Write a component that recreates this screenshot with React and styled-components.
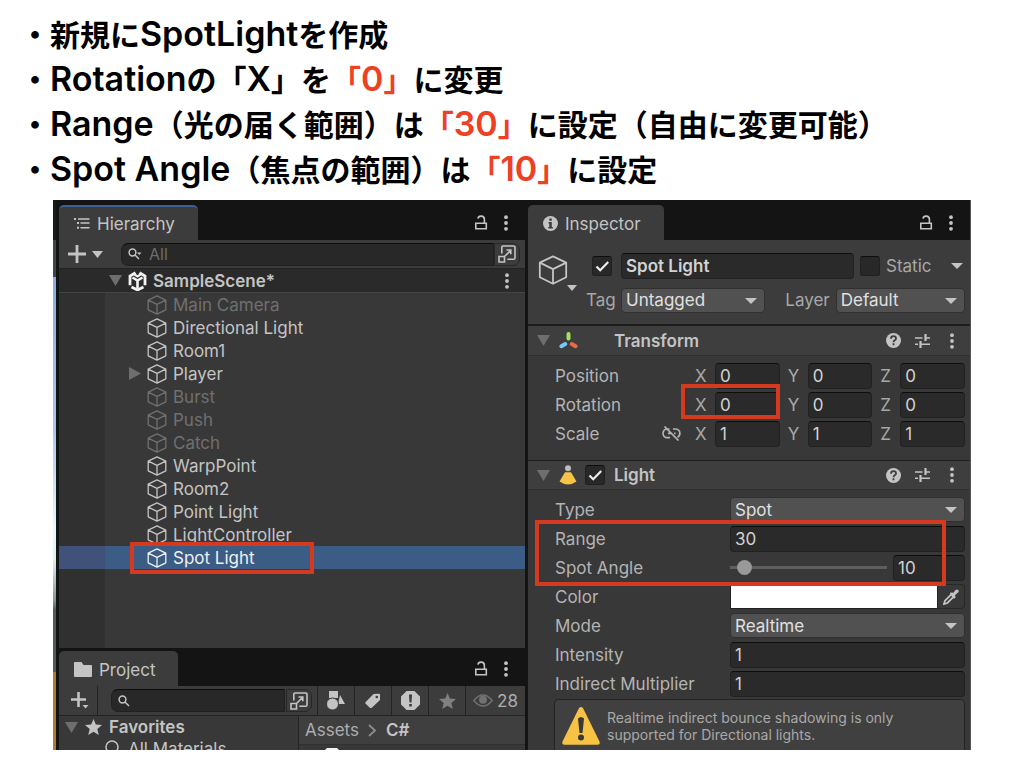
import React from "react";
import styled, { createGlobalStyle, css } from "styled-components";

const Global = createGlobalStyle`
  *, *::before, *::after { box-sizing: border-box; }
  body { margin: 0; background: #fff; }
  button, input, select { font: inherit; color: inherit; margin: 0; }
  button { padding: 0; border: 0; background: none; display: flex; align-items: center; justify-content: center; cursor: pointer; }
  svg { display: block; flex: none; }
  ul { list-style: none; margin: 0; padding: 0; }
`;

/* ---------- slide ---------- */
const Slide = styled.main`
  height: 100vh;
  min-height: 500px;
  display: flex;
  flex-direction: column;
  padding: 11px 53px 18px;
  overflow: hidden;
`;
const Notes = styled.ul`
  margin: 0 -33px 9px;
  font: 700 30px/45px "Noto Sans CJK JP", sans-serif;
  color: #000;
  white-space: nowrap;
`;
const Latin = styled.span`
  font: 600 34px/30px Inter, sans-serif;
`;
const Accent = styled.span`
  color: #ed4126;
`;
const Editor = styled.section`
  flex: 1;
  min-height: 0;
  display: grid;
  grid-template-columns: 6px minmax(0, 466fr) 3px minmax(0, 443fr);
  background: #141414;
  overflow: hidden;
  font: 400 17px/22px Inter, sans-serif;
  color: #c4c4c4;
`;
const SceneEdge = styled.div`
  border-right: 3px solid #111615;
  background: linear-gradient(
    #191919 0 40px, #444 40px 77px, #8aabdf 77px, #a9c5ee 230px,
    #e6fbfd 330px, #dfeeee 360px, #8d9596 400px, #575757 410px 472px, #b27a30 472px
  );
`;
const Column = styled.div`
  display: flex;
  flex-direction: column;
  min-height: 0;
  overflow: hidden;
`;

/* ---------- panel chrome ---------- */
const TabBar = styled.header`
  display: flex;
  flex: none;
  align-items: stretch;
  height: ${(p) => (p.$compact ? 38 : 40)}px;
  padding-top: ${(p) => (p.$compact ? 3 : 5)}px;
  background: #141414;
`;
const Tab = styled.button`
  && {
    justify-content: flex-start;
    gap: 7px;
    padding: 0 23px 0 15px;
    border-radius: 5px 5px 0 0;
    background: #3c3c3c;
    border-top: 2px solid ${(p) => (p.$focused ? "#3a6294" : "#3c3c3c")};
  }
`;
const TabTools = styled.div`
  margin-left: auto;
  display: flex;
  align-items: center;
  gap: 10px;
  padding-right: 11px;
`;
const Toolbar = styled.div`
  display: flex;
  flex: none;
  align-items: center;
  height: ${(p) => p.$height}px;
  background: #3c3c3c;
  border-bottom: 1px solid #232323;
`;
const AddButton = styled.button`
  && {
    gap: 6px;
    align-self: stretch;
    width: ${(p) => (p.$ruled ? 39 : 62)}px;
    padding-left: ${(p) => (p.$ruled ? 4 : 0)}px;
    padding-right: ${(p) => (p.$ruled ? 0 : 9)}px;
    margin-right: ${(p) => (p.$ruled ? 13 : 0)}px;
    border-right: ${(p) => (p.$ruled ? "1px solid #232323" : "0")};
  }
`;
const SearchBox = styled.label`
  flex: 1;
  min-width: 0;
  display: flex;
  align-items: center;
  gap: 7px;
  height: 23px;
  padding-left: 6px;
  background: #282828;
  border: 1px solid #202020;
  border-top-color: #0d0d0d;
  border-radius: 7px 0 0 7px;
`;
const SearchInput = styled.input`
  flex: 1;
  min-width: 0;
  height: 20px;
  padding: 0;
  border: 0;
  outline: 0;
  background: none;
  font-size: 16px;
  &::placeholder { color: #6d6d6d; opacity: 1; }
`;
const PickerButton = styled.button`
  && {
    width: 26px;
    height: 23px;
    background: #3c3c3c;
    border: 1px solid #282828;
    border-radius: 0 7px 7px 0;
    margin-right: ${(p) => p.$after}px;
    margin-left: ${(p) => p.$before || 0}px;
  }
`;
const FilterButton = styled.button`
  && {
    align-self: stretch;
    width: ${(p) => (p.$wide ? 60 : 37)}px;
    flex: none;
    gap: 4px;
    border-left: 1px solid #232323;
    color: ${(p) => (p.$dim ? "#808080" : "#c4c4c4")};
  }
`;
const HiddenCount = styled.span`
  color: #acacac;
`;

/* ---------- hierarchy ---------- */
const SceneRow = styled.div`
  display: flex;
  flex: none;
  align-items: center;
  gap: 6px;
  height: 24px;
  padding: 0 16px 0 50px;
  background: #2a2a2a;
  border-bottom: 1px solid #444;
  font-weight: 600;
`;
const Tree = styled.ul`
  flex: 1;
  min-height: 0;
  background: linear-gradient(90deg, #303030 46px, #383838 46px);
`;
const TreeRow = styled.li`
  position: relative;
  display: flex;
  align-items: center;
  gap: 6px;
  height: 23px;
  padding-left: 70px;
  color: ${(p) => (p.$off ? "#707070" : p.$selected ? "#f0f0f0" : "#c4c4c4")};
  ${(p) => p.$selected && css`background: linear-gradient(90deg, #40517a 46px, #3a5c85 46px);`}
`;
const FoldSlot = styled.span`
  width: 12px;
  display: flex;
`;
const Stretch = styled.span`
  flex: 1;
`;

/* ---------- project ---------- */
const ProjectBody = styled.div`
  flex: 0 0 34px;
  display: grid;
  grid-template-columns: minmax(0, 239fr) 1px minmax(0, 226fr);
  overflow: hidden;
  background: #383838;
`;
const Rule = styled.div`
  background: #232323;
`;
const Favorites = styled.ul`
  padding-left: 6px;
`;
const FavoriteRow = styled.li`
  display: flex;
  align-items: center;
  gap: 7px;
  height: 22px;
  padding-left: ${(p) => (p.$child ? 40 : 0)}px;
  font-weight: ${(p) => (p.$child ? 400 : 600)};
`;
const Crumbs = styled.nav`
  display: flex;
  align-items: center;
  gap: 9px;
  height: 29px;
  padding-left: 6px;
  background: #3f3f3f;
  border-bottom: 1px solid #303030;
`;
const Crumb = styled.a`
  color: ${(p) => (p.$current ? "#c4c4c4" : "#acacac")};
  font-weight: ${(p) => (p.$current ? 600 : 400)};
  text-decoration: none;
`;
const FileSlot = styled.div`
  padding: 3px 0 0 26px;
`;

/* ---------- inspector ---------- */
const Inspector = styled(Column)`
  background: #383838;
  border-right: 1px solid #555;
`;
const ObjectHeader = styled.div`
  display: flex;
  flex: none;
  gap: 9px;
  height: 86px;
  padding: 13px 5px 0 10px;
  background: #3c3c3c;
  border-bottom: 2px solid #1d1d1d;
`;
const ObjectIcon = styled.div`
  width: 39px;
  padding-top: 2px;
`;
const IconMenu = styled.div`
  display: flex;
  justify-content: flex-end;
`;
const ObjectFields = styled.div`
  flex: 1;
  min-width: 0;
  display: flex;
  flex-direction: column;
  gap: 8px;
`;
const HeaderLine = styled.div`
  display: flex;
  align-items: center;
  height: 26px;
  gap: 6px;
  padding-left: ${(p) => p.$indent || 0}px;
`;
const CheckWrap = styled.span`
  position: relative;
  display: flex;
  width: 20px;
  height: 20px;
  margin-right: ${(p) => p.$after || 0}px;
  svg { position: absolute; inset: 0; pointer-events: none; }
`;
const CheckInput = styled.input`
  appearance: none;
  width: 20px;
  height: 20px;
  background: #282828;
  border: 1px solid #202020;
  border-top-color: #0d0d0d;
  border-radius: 3px;
`;
const Field = styled.input`
  flex: 1;
  min-width: 0;
  width: 100%;
  height: 26px;
  padding: 0 4px;
  background: #2a2a2a;
  border: 1px solid #212121;
  border-top-color: #0d0d0d;
  border-radius: 4px;
  outline: 0;
  color: #d2d2d2;
  font-weight: ${(p) => (p.$strong ? 600 : 400)};
`;
const SelectWrap = styled.span`
  position: relative;
  flex: ${(p) => p.$grow || 1} 1 0;
  min-width: 0;
  display: flex;
  svg { position: absolute; right: 8px; top: 10px; pointer-events: none; }
`;
const Select = styled.select`
  appearance: none;
  width: 100%;
  height: 25px;
  padding: 0 22px 0 4px;
  background: #515151;
  border: 1px solid #303030;
  border-radius: 4px;
  color: #e0e0e0;
`;
const DimLabel = styled.label`
  color: #a8a8a8;
  width: ${(p) => (p.$width ? p.$width + "px" : "auto")};
`;
const LayerLabel = styled(DimLabel)`
  padding-left: 14px;
`;
const StaticMenu = styled.button`
  && { width: 16px; height: 20px; }
`;
const MenuButton = styled.button`
  && { width: 16px; }
`;
const ComponentHeader = styled.header`
  display: flex;
  flex: none;
  align-items: center;
  height: 30px;
  padding: 0 10px 0 9px;
  background: #3e3e3e;
  border-bottom: 1px solid #2f2f2f;
  border-top: ${(p) => (p.$ruled ? "1px solid #1d1d1d" : "0")};
`;
const ComponentIcon = styled.span`
  width: 26px;
  margin-left: 9px;
`;
const ComponentTitle = styled.h2`
  margin: 0;
  flex: 1;
  padding-left: ${(p) => p.$indent}px;
  font: inherit;
  font-weight: 600;
`;
const ComponentTools = styled.div`
  display: flex;
  align-items: center;
  gap: 14px;
`;
const ComponentBody = styled.div`
  flex: none;
  padding: 5px 5px ${(p) => p.$end || 0}px 27px;
`;
const PropertyRow = styled.div`
  display: flex;
  align-items: center;
  height: 29px;
`;
const PropertyLabel = styled.label`
  flex: 0 0 175px;
  color: #b4b4b4;
`;
const LinkedLabel = styled.span`
  flex: 0 0 140px;
  display: flex;
  align-items: center;
  justify-content: space-between;
  padding-right: 14px;
  color: #b4b4b4;
`;
const Axes = styled.div`
  flex: 1;
  min-width: 0;
  display: grid;
  grid-template-columns: repeat(3, minmax(0, 1fr));
  gap: 8px;
`;
const Axis = styled.label`
  position: relative;
  display: flex;
  align-items: center;
  color: #a8a8a8;
`;
const AxisName = styled.span`
  flex: 0 0 20px;
`;
const HighlightGroup = styled.div`
  position: relative;
`;
const Highlight = styled.span`
  position: absolute;
  z-index: 2;
  inset: ${(p) => p.$inset};
  width: ${(p) => p.$width || "auto"};
  border: 4px solid #d33a20;
  pointer-events: none;
`;
const Slider = styled.input`
  appearance: none;
  flex: 1;
  min-width: 0;
  height: 20px;
  margin: 0 6px 0 0;
  background: linear-gradient(#5e5e5e, #5e5e5e) center / 100% 3px no-repeat;
  &::-webkit-slider-thumb {
    appearance: none;
    width: 15px;
    height: 15px;
    border-radius: 50%;
    background: #999;
  }
`;
const SliderValue = styled.span`
  flex: 0 0 72px;
  display: flex;
`;
const ColorInput = styled.input`
  appearance: none;
  flex: 1;
  min-width: 0;
  height: 25px;
  padding: 0;
  border: 1px solid #212121;
  background: #fff;
  &::-webkit-color-swatch-wrapper { padding: 0; }
  &::-webkit-color-swatch { border: 0; }
`;
const DropperButton = styled.button`
  && {
    width: 27px;
    height: 25px;
    border: 1px solid #282828;
    border-left: 0;
    border-radius: 0 4px 4px 0;
  }
`;
const HelpBox = styled.aside`
  display: flex;
  align-items: center;
  gap: 7px;
  height: 54px;
  margin: 1px 0 0 -1px;
  padding: 0 7px;
  background: #404040;
  border: 1px solid #232323;
  border-radius: 4px;
  font-size: 14px;
  line-height: 17px;
  color: #a8a8a8;
`;
const HelpText = styled.p`
  margin: 0;
`;

/* ---------- icons ---------- */
const Down = ({ w = 12, h = 6, fill = "#c4c4c4" }) => (
  <svg width={w} height={h} viewBox="0 0 12 6" preserveAspectRatio="none"><path d="M0 0h12L6 6z" fill={fill} /></svg>
);
const Fold = () => (
  <svg width="13" height="11" viewBox="0 0 13 11"><path d="M0 0h13L6.5 11z" fill="#6e6e6e" /></svg>
);
const FoldRight = () => (
  <svg width="12" height="13" viewBox="0 0 12 13"><path d="M0 0l12 6.5L0 13z" fill="#6e6e6e" /></svg>
);
const Cube = ({ size = 20, stroke = 1.3 }) => (
  <svg width={size} height={size} viewBox="0 0 20 20" fill="none" stroke="currentColor" strokeWidth={stroke} strokeLinejoin="round">
    <path d="M10 .9l8.800 4.200v9.700L10 19.200l-8.800-4.400V5.100zM1.200 5.100L10 9.400l8.800-4.300M10 9.400v9.800" />
  </svg>
);
const Kebab = () => (
  <svg width="4" height="16" viewBox="0 0 4 16" fill="#c4c4c4">
    <circle cx="2" cy="2.2" r="1.9" /><circle cx="2" cy="8" r="1.9" /><circle cx="2" cy="13.8" r="1.9" />
  </svg>
);
const Lock = () => (
  <svg width="14" height="16" viewBox="0 0 14 16" fill="none" stroke="#c4c4c4" strokeWidth="1.6">
    <path d="M1.800 8.200h10.500v5.600H1.800zM10.400 8V4.400c0-4.200-6-4.200-6.400-.8" />
  </svg>
);
const ListIcon = () => (
  <svg width="16" height="14" viewBox="0 0 16 14" fill="#c4c4c4">
    <path d="M0 1h2v2H0zM4 1.200h11.500v1.500H4zM3 5h2v2H3zM6.500 5.200H15.500v1.500H6.500zM3 9.800h2v2H3zM6.500 10H15.500v1.500H6.500z" />
  </svg>
);
const Folder = () => (
  <svg width="18" height="15" viewBox="0 0 18 15"><path d="M0 1q0-1 1-1h6.500l2 3H17q1 0 1 1v10q0 1-1 1H1q-1 0-1-1z" fill="#c4c4c4" /></svg>
);
const Info = () => (
  <svg width="15" height="15" viewBox="0 0 15 15">
    <circle cx="7.500" cy="7.500" r="7.500" fill="#c4c4c4" />
    <path d="M6.300 2.500h2.500v2.300H6.300zM5.500 6h3.300v5h1v1.500H5.300V11h1V7.400h-.8z" fill="#3c3c3c" />
  </svg>
);
const Plus = () => (
  <svg width="18" height="18" viewBox="0 0 18 18"><path d="M7.600 0h2.800v7.600H18v2.800h-7.600V18H7.600v-7.600H0V7.600h7.600z" fill="#c4c4c4" /></svg>
);
const PlusMenu = () => (
  <svg width="18" height="17" viewBox="0 0 18 17" fill="#c4c4c4"><path d="M6.200 0h2.600v6.200H15v2.600H8.800V15H6.200V8.800H0V6.200h6.200zM11.500 13h6l-3 3.500z" /></svg>
);
const Search = ({ menu }) => (
  <svg width="14" height="12" viewBox="0 0 14 12" fill="none" stroke="#c4c4c4" strokeWidth="1.500">
    <circle cx="4.500" cy="4.500" r="3.400" /><path d="M7 7l4 4" />
    {menu && <path d="M9 4.500h4.500L11.200 7z" fill="#c4c4c4" stroke="none" />}
  </svg>
);
const Picker = () => (
  <svg width="18" height="18" viewBox="0 0 18 18" fill="none" stroke="#c4c4c4" strokeWidth="1.600">
    <path d="M3.800 8.500V2.300q0-1.300 1.300-1.300h10.600q1.300 0 1.300 1.300v10.600q0 1.300-1.300 1.300H9.300M1 11.500h5.500V17H1zM6.500 11.500l6-6M8.500 5h4.300v4.300" />
  </svg>
);
const UnityIcon = () => (
  <svg width="19" height="20" viewBox="0 0 19 20" fill="none">
    <path d="M7.500 1.800L2 5v9.300M11.500 1.800L17 5v9.300M3.500 16l6 3 6-3" stroke="#f2f2f2" strokeWidth="2.800" />
    <path d="M4.500 6.500l5 3 5-3M9.500 9.500v8" stroke="#f2f2f2" strokeWidth="2.600" />
    <path d="M6.500 3.500l3 2 3-2" stroke="#f2f2f2" strokeWidth="2.200" />
  </svg>
);
const Shapes = () => (
  <svg width="18" height="19" viewBox="0 0 18 19" fill="#c4c4c4">
    <path d="M2 0h9v7H2zM13 4l5 9h-7z" /><circle cx="5.500" cy="13" r="6" stroke="#3c3c3c" strokeWidth="1" />
  </svg>
);
const TagIcon = () => (
  <svg width="16" height="16" viewBox="0 0 16 16">
    <path d="M8.500 1l5.300-.3q1.300 0 1.300 1.300L15 7 6.800 14.700q-1 .8-2 0L.7 10.800q-.9-1 0-1.800z" fill="#c4c4c4" />
    <circle cx="11.800" cy="4" r="1.300" fill="#3c3c3c" />
  </svg>
);
const Alert = () => (
  <svg width="19" height="19" viewBox="0 0 19 19">
    <path d="M5.600 0h7.800L19 5.600v7.800L13.400 19H5.600L0 13.400V5.600z" fill="#c4c4c4" />
    <path d="M8 3.500h3l-.5 8h-2zM8.200 13h2.600v2.500H8.200z" fill="#3c3c3c" />
  </svg>
);
const Star = ({ fill = "#c4c4c4" }) => (
  <svg width="17" height="16" viewBox="0 0 17 16"><path d="M8.500 0l2.300 5.500 6.200.5-4.700 4 1.500 6-5.300-3.200L3.200 16l1.500-6L0 6l6.200-.5z" fill={fill} /></svg>
);
const Eye = () => (
  <svg width="20" height="13" viewBox="0 0 20 13" fill="none" stroke="#717171" strokeWidth="1.400">
    <path d="M.8 6.500Q10-4.500 19.200 6.500 10 17.500.8 6.500z" /><circle cx="10" cy="5.800" r="4" fill="#717171" stroke="none" />
  </svg>
);
const Chevron = () => (
  <svg width="9" height="13" viewBox="0 0 9 13" fill="none" stroke="#8a8a8a" strokeWidth="1.900"><path d="M1 1l6 5.500L1 12" /></svg>
);
const Lens = () => (
  <svg width="16" height="18" viewBox="0 0 16 18" fill="none" stroke="#c4c4c4" strokeWidth="1.500"><circle cx="7" cy="7" r="6" /><path d="M11 12l4 5" /></svg>
);
const FileTop = () => (
  <svg width="15" height="18" viewBox="0 0 15 18"><path d="M2 0h10l3 3v15H0V2z" fill="#f4f4f4" /></svg>
);
const Tick = () => (
  <svg width="20" height="20" viewBox="0 0 20 20"><path d="M4.500 10.500l3.700 3.700 8-8.200" fill="none" stroke="#ececec" strokeWidth="2.200" /></svg>
);
const AxesIcon = () => (
  <svg width="19" height="17" viewBox="0 0 19 17" strokeWidth="4" strokeLinecap="round">
    <path d="M9.500 2v4.500" stroke="#a4e05b" /><path d="M6.200 12l-3.800 2.200" stroke="#7cc5f5" /><path d="M12.800 12l3.800 2.200" stroke="#ee6a43" />
  </svg>
);
const Lamp = () => (
  <svg width="18" height="20" viewBox="0 0 18 20">
    <circle cx="9" cy="3.200" r="3" fill="#bdbdbd" /><path d="M6 7.200h6l5.500 9.300Q9 22.500.5 16.500z" fill="#f6c344" />
  </svg>
);
const Help = () => (
  <svg width="15" height="15" viewBox="0 0 15 15">
    <circle cx="7.500" cy="7.500" r="7.500" fill="#c4c4c4" />
    <path d="M5 5.700q0-2.500 2.500-2.500T10 5.400q0 1.200-1.200 1.900T7.500 9.200M7.500 10.300v2" fill="none" stroke="#3e3e3e" strokeWidth="1.800" />
  </svg>
);
const Preset = () => (
  <svg width="15" height="14" viewBox="0 0 15 14" fill="none" stroke="#c4c4c4">
    <path d="M0 4h7.500M10.500 4H15M0 10.200h3M5.500 10.200H15" strokeWidth="1.600" /><path d="M10.500 0v7M5.500 7v7" strokeWidth="2.200" />
  </svg>
);
const Unlink = () => (
  <svg width="19" height="15" viewBox="0 0 19 15" fill="none" stroke="#b4b4b4" strokeWidth="1.700">
    <path d="M7.500 3H5.200q-4 .3-4.200 4.200.2 4.300 4.200 4.500H8M11 3h2.500q4.200.3 4.400 4.200 0 2.800-2.400 4M6 7.300h3M12 7.300h1.500M2.500.5l14 14" />
  </svg>
);
const Dropper = () => (
  <svg width="16" height="16" viewBox="0 0 16 16">
    <path d="M7.500 3.500l3 .3 1.800-2.600q1.700-1.600 3 0t-.8 2.800l-2.400 2 .4 2.700-1.600 1L6.800 5z" fill="#c4c4c4" />
    <path d="M7.800 5.800L2 11.600l-1 3.400 3.400-1 5.800-5.800" fill="none" stroke="#c4c4c4" strokeWidth="1.800" />
  </svg>
);
const Warning = () => (
  <svg width="38" height="38" viewBox="0 0 38 38">
    <path d="M16.800 1.500q2.200-2.800 4.400 0L37.500 34.500q1 3-1.800 3.300H2.300Q-.5 37.500.5 34.500z" fill="#f6c344" />
    <path d="M16 11.500q3-3 6 0l-1.500 14.500h-3z" fill="#383838" /><circle cx="19" cy="30.500" r="3" fill="#383838" />
  </svg>
);

/* ---------- parts ---------- */
function Check({ id, label, checked, after }) {
  return (
    <CheckWrap $after={after}>
      <CheckInput id={id} type="checkbox" defaultChecked={checked} aria-label={label} />
      {checked && <Tick />}
    </CheckWrap>
  );
}
function Dropdown({ id, value, grow }) {
  return (
    <SelectWrap $grow={grow}>
      <Select id={id} defaultValue={value}><option>{value}</option></Select>
      <Down />
    </SelectWrap>
  );
}
function PanelTools() {
  return (
    <TabTools>
      <button aria-label="Lock"><Lock /></button>
      <MenuButton aria-label="Menu"><Kebab /></MenuButton>
    </TabTools>
  );
}
function Vector({ name, values, linked, mark }) {
  return (
    <PropertyRow role="group" aria-label={name}>
      <LinkedLabel>{name}{linked && <Unlink />}</LinkedLabel>
      <Axes>
        {["X", "Y", "Z"].map((axis, i) => (
          <Axis key={axis}>
            <AxisName>{axis}</AxisName>
            <Field defaultValue={values[i]} />
            {mark === axis && <Highlight $inset="-8px 0 -1px -14px" />}
          </Axis>
        ))}
      </Axes>
    </PropertyRow>
  );
}
function TextProperty({ id, name, value }) {
  return (
    <PropertyRow>
      <PropertyLabel htmlFor={id}>{name}</PropertyLabel>
      <Field id={id} defaultValue={value} />
    </PropertyRow>
  );
}
function SelectProperty({ id, name, value }) {
  return (
    <PropertyRow>
      <PropertyLabel htmlFor={id}>{name}</PropertyLabel>
      <Dropdown id={id} value={value} />
    </PropertyRow>
  );
}
function HeaderTools() {
  return (
    <ComponentTools>
      <button aria-label="Help"><Help /></button>
      <button aria-label="Presets"><Preset /></button>
      <MenuButton aria-label="Menu"><Kebab /></MenuButton>
    </ComponentTools>
  );
}

const objects = [
  { name: "Main Camera", off: true },
  { name: "Directional Light" },
  { name: "Room1" },
  { name: "Player", parent: true },
  { name: "Burst", off: true },
  { name: "Push", off: true },
  { name: "Catch", off: true },
  { name: "WarpPoint" },
  { name: "Room2" },
  { name: "Point Light" },
  { name: "LightController" },
  { name: "Spot Light", selected: true },
];

function HierarchyPanel() {
  return (
    <>
      <TabBar>
        <Tab $focused><ListIcon />Hierarchy</Tab>
        <PanelTools />
      </TabBar>
      <Toolbar $height={29}>
        <AddButton aria-label="Create"><Plus /><Down w={11} h={7} /></AddButton>
        <SearchBox>
          <Search menu />
          <SearchInput placeholder="All" aria-label="Search hierarchy" />
        </SearchBox>
        <PickerButton aria-label="Open search" $after={5}><Picker /></PickerButton>
      </Toolbar>
      <SceneRow>
        <Fold /><UnityIcon />SampleScene*<Stretch /><Kebab />
      </SceneRow>
      <Tree>
        {objects.map((o) => (
          <TreeRow key={o.name} $off={o.off} $selected={o.selected}>
            <FoldSlot>{o.parent && <FoldRight />}</FoldSlot>
            <Cube />
            {o.name}
            {o.selected && <Highlight $inset="-4px auto -5px 71px" $width="184px" />}
          </TreeRow>
        ))}
      </Tree>
    </>
  );
}

function ProjectPanel() {
  return (
    <>
      <TabBar $compact>
        <Tab><Folder />Project</Tab>
        <PanelTools />
      </TabBar>
      <Toolbar $height={30}>
        <AddButton aria-label="Create asset" $ruled><PlusMenu /></AddButton>
        <SearchBox>
          <Search />
          <SearchInput aria-label="Search project" />
        </SearchBox>
        <PickerButton aria-label="Open search" $before={1} $after={5}><Picker /></PickerButton>
        <FilterButton aria-label="Search by type"><Shapes /></FilterButton>
        <FilterButton aria-label="Search by label"><TagIcon /></FilterButton>
        <FilterButton aria-label="Search by import log"><Alert /></FilterButton>
        <FilterButton aria-label="Save search"><Star fill="#808080" /></FilterButton>
        <FilterButton $wide $dim><Eye /><HiddenCount>28</HiddenCount></FilterButton>
      </Toolbar>
      <ProjectBody>
        <Favorites>
          <FavoriteRow><Fold /><Star />Favorites</FavoriteRow>
          <FavoriteRow $child><Lens />All Materials</FavoriteRow>
        </Favorites>
        <Rule />
        <div>
          <Crumbs>
            <Crumb href="#assets">Assets</Crumb>
            <Chevron />
            <Crumb href="#csharp" $current>C#</Crumb>
          </Crumbs>
          <FileSlot><FileTop /></FileSlot>
        </div>
      </ProjectBody>
    </>
  );
}

function InspectorPanel() {
  return (
    <Inspector>
      <TabBar>
        <Tab><Info />Inspector</Tab>
        <PanelTools />
      </TabBar>
      <ObjectHeader>
        <ObjectIcon>
          <Cube size={30} stroke={1.2} />
          <IconMenu><Down w={10} h={6} /></IconMenu>
        </ObjectIcon>
        <ObjectFields>
          <HeaderLine $indent={6}>
            <Check id="active" label="Active" checked after={3} />
            <Field $strong defaultValue="Spot Light" aria-label="Name" />
            <Check id="static" />
            <DimLabel htmlFor="static" $width={57}>Static</DimLabel>
            <StaticMenu aria-label="Static options"><Down /></StaticMenu>
          </HeaderLine>
          <HeaderLine>
            <DimLabel htmlFor="tag" $width={29}>Tag</DimLabel>
            <Dropdown id="tag" value="Untagged" grow={144} />
            <LayerLabel htmlFor="layer">Layer</LayerLabel>
            <Dropdown id="layer" value="Default" grow={129} />
          </HeaderLine>
        </ObjectFields>
      </ObjectHeader>
      <ComponentHeader>
        <Fold />
        <ComponentIcon><AxesIcon /></ComponentIcon>
        <ComponentTitle $indent={29}>Transform</ComponentTitle>
        <HeaderTools />
      </ComponentHeader>
      <ComponentBody $end={12}>
        <Vector name="Position" values={["0", "0", "0"]} />
        <Vector name="Rotation" values={["0", "0", "0"]} mark="X" />
        <Vector name="Scale" values={["1", "1", "1"]} linked />
      </ComponentBody>
      <ComponentHeader $ruled>
        <Fold />
        <ComponentIcon><Lamp /></ComponentIcon>
        <Check id="light-on" label="Light enabled" checked />
        <ComponentTitle $indent={9}>Light</ComponentTitle>
        <HeaderTools />
      </ComponentHeader>
      <ComponentBody>
        <SelectProperty id="type" name="Type" value="Spot" />
        <HighlightGroup>
          <TextProperty id="range" name="Range" value="30" />
          <PropertyRow>
            <PropertyLabel htmlFor="angle">Spot Angle</PropertyLabel>
            <Slider id="angle" type="range" min="1" max="179" defaultValue="10" />
            <SliderValue><Field defaultValue="10" aria-label="Spot Angle value" /></SliderValue>
          </PropertyRow>
          <Highlight $inset="-4px 19px -4px -20px" />
        </HighlightGroup>
        <PropertyRow>
          <PropertyLabel htmlFor="color">Color</PropertyLabel>
          <ColorInput id="color" type="color" defaultValue="#ffffff" />
          <DropperButton aria-label="Pick color"><Dropper /></DropperButton>
        </PropertyRow>
        <SelectProperty id="mode" name="Mode" value="Realtime" />
        <TextProperty id="intensity" name="Intensity" value="1" />
        <TextProperty id="indirect" name="Indirect Multiplier" value="1" />
        <HelpBox>
          <Warning />
          <HelpText>Realtime indirect bounce shadowing is only<br />supported for Directional lights.</HelpText>
        </HelpBox>
      </ComponentBody>
    </Inspector>
  );
}

export default function App() {
  return (
    <>
      <Global />
      <Slide>
        <Notes>
          <li>・新規に<Latin>SpotLight</Latin>を作成</li>
          <li>・<Latin>Rotation</Latin>の「<Latin>X</Latin>」を<Accent>「<Latin>0</Latin>」</Accent>に変更</li>
          <li>・<Latin>Range</Latin>（光の届く範囲）は<Accent>「<Latin>30</Latin>」</Accent>に設定（自由に変更可能）</li>
          <li>・<Latin>Spot Angle</Latin>（焦点の範囲）は<Accent>「<Latin>10</Latin>」</Accent>に設定</li>
        </Notes>
        <Editor>
          <SceneEdge />
          <Column>
            <HierarchyPanel />
            <ProjectPanel />
          </Column>
          <div />
          <InspectorPanel />
        </Editor>
      </Slide>
    </>
  );
}
